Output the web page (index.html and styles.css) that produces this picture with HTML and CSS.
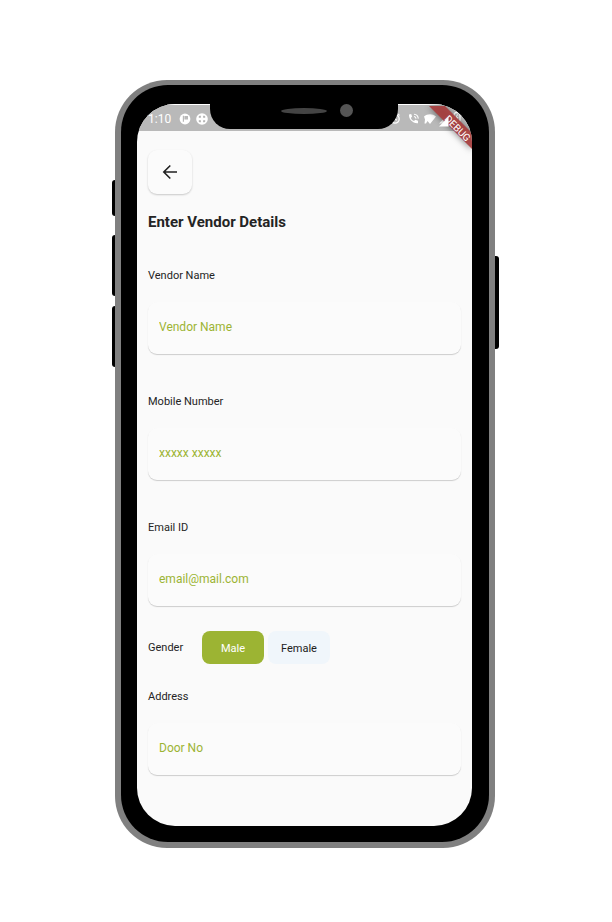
FILE: index.html
```html
<!DOCTYPE html>
<html lang="en">
<head>
<meta charset="utf-8">
<title>Enter Vendor Details</title>
<link rel="stylesheet" href="styles.css">
</head>
<body>
<div class="phone">
  <span class="side-key key-mute"></span>
  <span class="side-key key-up"></span>
  <span class="side-key key-down"></span>
  <span class="side-key key-power"></span>
  <div class="bezel">
    <div class="screen">
      <header class="status">
        <span class="clock">1:10</span>
        <svg class="status-icon" viewBox="0 0 12 12" width="12" height="12"><circle cx="6" cy="6" r="5.4" fill="#fff"/><path d="M4.400 2.800v6M6 3.500h2.400v2.300H6z" fill="#b8b8b8" stroke="#b8b8b8" stroke-width="1.200"/></svg>
        <svg class="status-icon" viewBox="0 0 12 12" width="12" height="12"><circle cx="6" cy="6" r="5.800" fill="#fff"/><path d="M4.100 2.800v1.300H2.800M7.900 2.800v1.300h1.300M4.100 9.200V7.900H2.800M7.900 9.200V7.900h1.300" fill="none" stroke="#b0b0b0" stroke-width="1.500"/></svg>
        <svg class="status-right" viewBox="0 0 80 16" width="80" height="16" fill="none" stroke="#fff">
          <circle cx="14" cy="8" r="4.2" stroke-width="1.2"/><path d="M14 5.6V8l1.8 1.2M16.4 2.6l2.2 1.8" stroke-width="1.1"/>
          <path d="M28 3.500l2.200-.5.900 2.600-1.300 1.300c.7 1.500 1.700 2.500 3.200 3.200l1.300-1.300 2.700 1v2.400C32 12.800 27.500 8 28 3.500z" fill="#fff" stroke="none"/>
          <path d="M33 5.500c1.300.2 1.900.9 2.100 2.100M33 3.300c2.500.2 4 1.700 4.300 4.300" stroke-width="1.100"/>
          <path d="M43 5.500c3.500-3 8.500-3 12 0L49 13 46.500 10l-1.500 2.500h-1.500l.5-4z" fill="#fff" stroke="none"/>
          <path d="M58 12.500L67.500 3v9.500z" fill="#fff" stroke="none"/>
          <rect x="73" y="1.500" width="6" height="9.500" rx="2.500" stroke-width="1.300"/><path d="M76.500 3.500L75 6.500h2l-1.500 2.500" stroke-width="1"/>
        </svg>
      </header>
      <svg class="ribbon" viewBox="0 0 48 54" width="48" height="54">
        <path d="M5 2h16L48 29v16z" class="ribbon-band"/>
        <path d="M15 22.500L24.500 13v9.500z" fill="#fff"/>
        <text x="34" y="28" transform="rotate(45 34 24)" class="ribbon-text">DEBUG</text>
      </svg>
      <main class="content">
        <button class="back" type="button" aria-label="Back">
          <svg viewBox="0 0 16 16" width="16" height="16"><path d="M15 8H2M8.300 1.500L1.800 8l6.500 6.500" fill="none" stroke="#202020" stroke-width="1.600"/></svg>
        </button>
        <h1>Enter Vendor Details</h1>
        <form>
          <div class="field"><label for="name">Vendor Name</label><input id="name" type="text" placeholder="Vendor Name"></div>
          <div class="field"><label for="mobile">Mobile Number</label><input id="mobile" type="tel" placeholder="xxxxx xxxxx"></div>
          <div class="field"><label for="email">Email ID</label><input id="email" type="email" placeholder="email@mail.com"></div>
          <div class="gender" role="group" aria-labelledby="gender-label">
            <span class="gender-label" id="gender-label">Gender</span>
            <button class="choice selected" type="button" aria-pressed="true">Male</button>
            <button class="choice" type="button" aria-pressed="false">Female</button>
          </div>
          <div class="field"><label for="address">Address</label><input id="address" type="text" placeholder="Door No"></div>
        </form>
      </main>
    </div>
    <div class="notch"><span class="speaker"></span><span class="camera"></span></div>
  </div>
</div>
</body>
</html>
```
FILE: styles.css
```css
* { box-sizing: border-box; }
body {
  margin: 0;
  padding: 80px 117px 74px 115px;
  background: #fff;
  font-family: Roboto, "Liberation Sans", sans-serif;
  color: #242424;
}
.phone {
  position: relative;
  padding: 5px 6px 6px;
  border-radius: 52px;
  background: #808080;
}
.bezel {
  position: relative;
  padding: 19px 17px 16px 16px;
  border-radius: 47px;
  background: #000;
}
.screen {
  position: relative;
  isolation: isolate;
  overflow: hidden;
  border-radius: 38px;
  background: #fafafa;
}
.side-key {
  position: absolute;
  left: -3px;
  width: 3px;
  border-radius: 3px 0 0 3px;
  background: #000;
}
.key-mute { top: 100px; height: 36px; }
.key-up { top: 155px; height: 61px; }
.key-down { top: 226px; height: 61px; }
.key-power {
  top: 176px;
  right: -4px;
  left: auto;
  width: 4px;
  height: 93px;
  border-radius: 0 3px 3px 0;
}
.notch {
  position: absolute;
  top: 0;
  left: 89px;
  right: 91px;
  height: 44px;
  border-radius: 0 0 20px 20px;
  background: #000;
}
.speaker {
  position: absolute;
  top: 23px;
  left: 50%;
  width: 46px;
  height: 6px;
  margin-left: -23px;
  border-radius: 50%;
  background: #444;
}
.camera {
  position: absolute;
  top: 19px;
  left: 50%;
  width: 13px;
  height: 13px;
  margin-left: 36px;
  border-radius: 50%;
  background: #555;
}
.status {
  display: flex;
  align-items: center;
  height: 27px;
  padding: 2px 11px 0 11px;
  border-top: 1px solid #fff;
  background: #b9b9b9;
}
.clock {
  width: 31px;
  font-size: 12px;
  line-height: 16px;
  color: #fff;
}
.status-icon { margin-right: 5px; }
.status-right { margin-left: auto; }
.ribbon {
  position: absolute;
  top: 0;
  right: 0;
}
.ribbon-band {
  fill: #a83c3c;
  fill-opacity: 0.9;
  filter: drop-shadow(0 1px 3px rgba(0, 0, 0, 0.5));
}
.ribbon-text {
  fill: #fff;
  font-size: 10px;
  text-anchor: middle;
}
.content { padding: 19px 11px 51px; }
.back {
  display: flex;
  align-items: center;
  justify-content: center;
  width: 44px;
  height: 44px;
  padding: 0;
  border: 0;
  border-radius: 9px;
  background: #fbfbfb;
  box-shadow: 0 1px 2px rgba(0, 0, 0, 0.2);
}
h1 {
  margin: 18px 0 35px;
  font-size: 15px;
  line-height: 20px;
  font-weight: 700;
}
.field {
  display: flex;
  flex-direction: column;
  gap: 17px;
}
.field + .field { margin-top: 39px; }
label, .gender-label {
  font-size: 11px;
  line-height: 18px;
}
input {
  width: 100%;
  height: 52px;
  padding: 0 11px 2px;
  border: 0;
  border-radius: 9px;
  background: #fbfbfb;
  box-shadow: 0 1px 1px rgba(0, 0, 0, 0.18);
  font-family: inherit;
  font-size: 12px;
  color: #9cb433;
}
input::placeholder { color: #9cb433; opacity: 1; }
.gender {
  display: flex;
  align-items: center;
  gap: 4px;
  margin: 25px 0 24px;
}
.gender-label { width: 50px; }
.choice {
  width: 62px;
  height: 33px;
  padding: 1px 0 0;
  border: 0;
  border-radius: 8px;
  background: #f0f6fb;
  font-family: inherit;
  font-size: 11px;
  color: #202020;
}
.choice.selected { background: #9cb433; color: #fff; }
```
